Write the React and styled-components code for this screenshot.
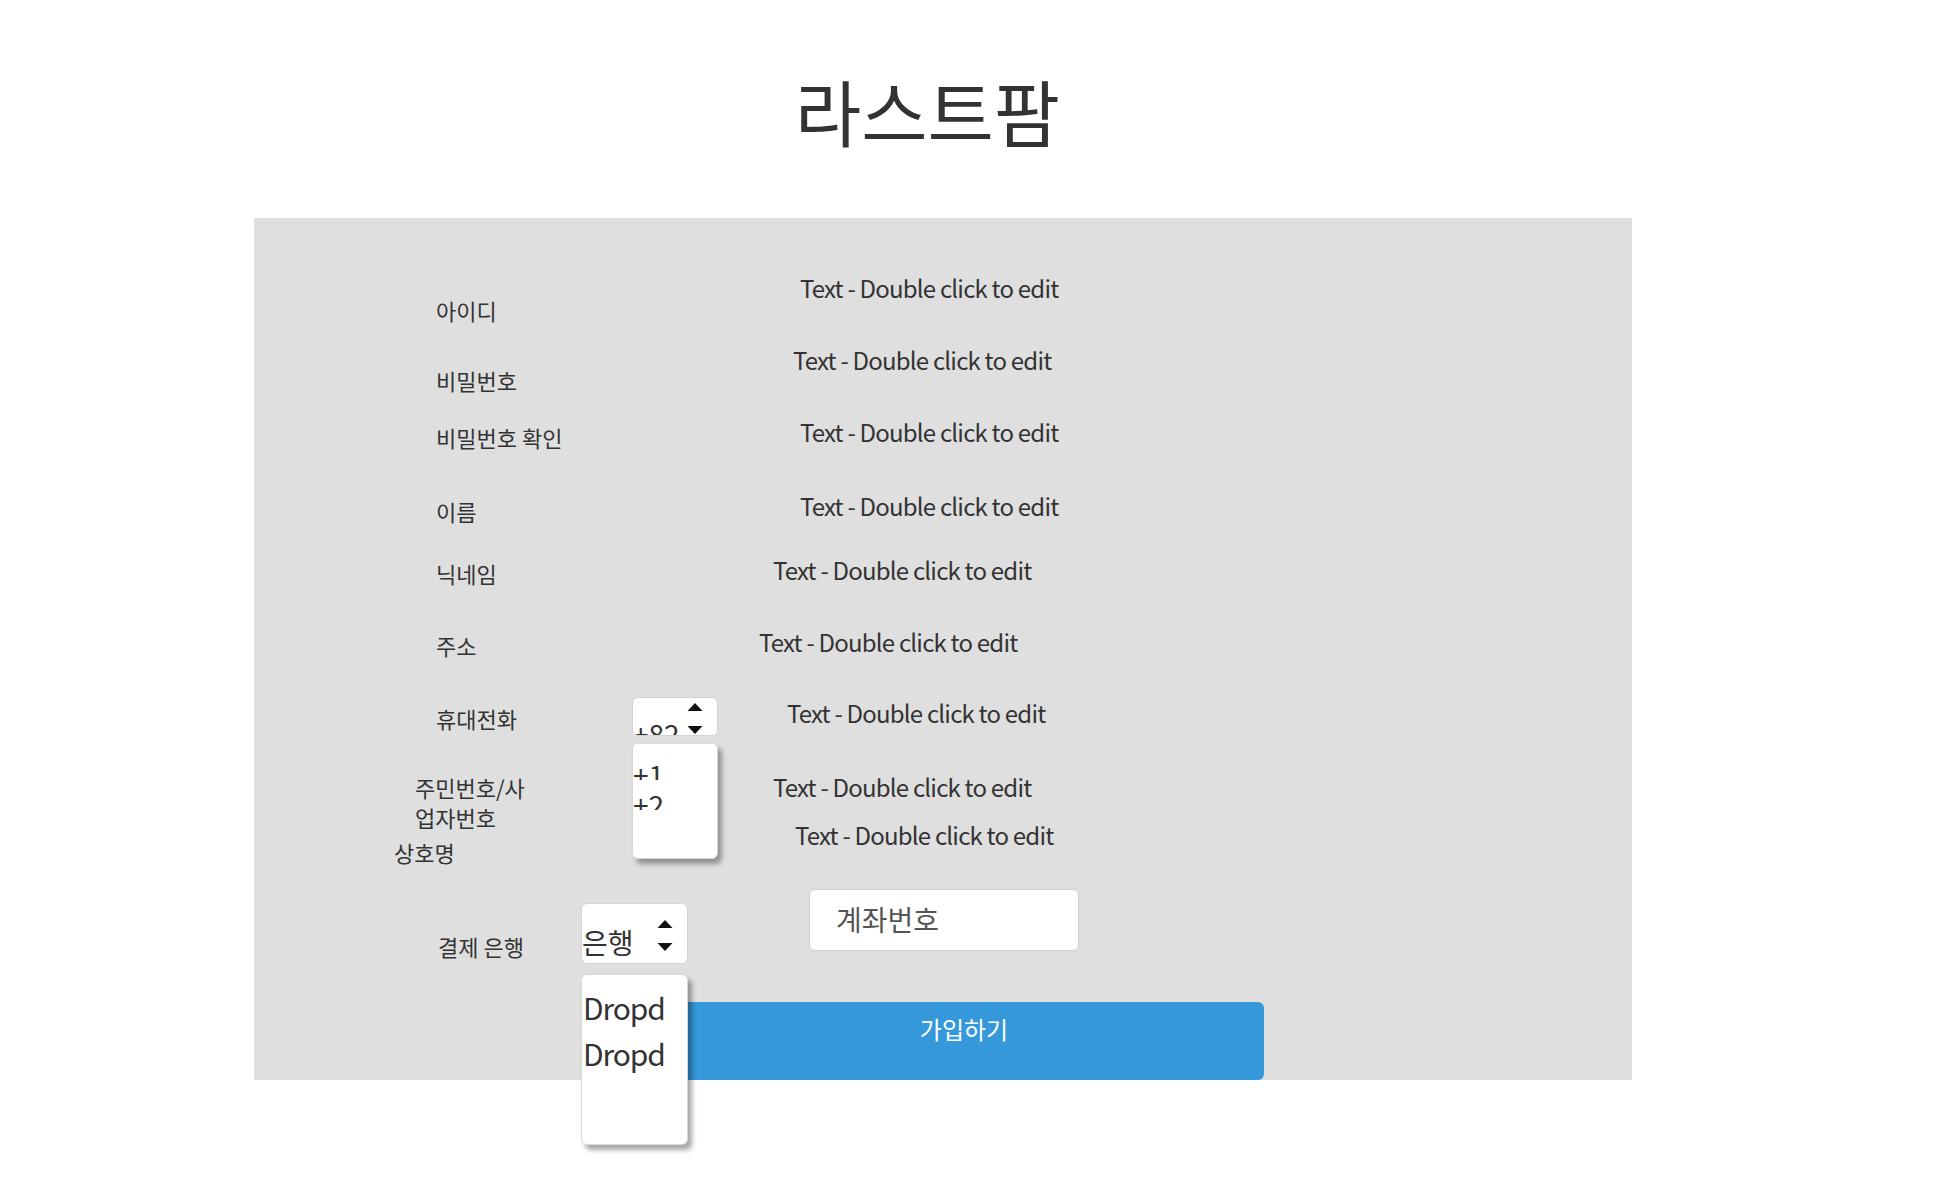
import styled, { createGlobalStyle } from "styled-components";

const GlobalStyle = createGlobalStyle`
  html, body {
    margin: 0;
    padding: 0;
    background: #ffffff;
  }
  body {
    font-family: "Noto Sans CJK KR", "Noto Sans", sans-serif;
    color: #333333;
  }
`;

const Page = styled.main`
  width: 1956px;
  min-height: 1200px;
`;

const Header = styled.header`
  height: 218px;
  box-sizing: border-box;
  padding: 74px 0 0 795px;
`;

const Title = styled.h1`
  margin: 0;
  font-size: 72px;
  font-weight: 400;
  line-height: 72px;
  color: #333333;
`;

const Panel = styled.section`
  margin-left: 254px;
  width: 1378px;
  height: 862px;
  background: #dfdfdf;
  display: flex;
  flex-direction: column;
`;

const Fields = styled.div`
  display: flex;
  height: 671px;
`;

const LabelColumn = styled.div`
  width: 378px;
  display: flex;
  flex-direction: column;
  align-items: flex-start;
`;

const Label = styled.div`
  margin: ${({ $top }) => $top}px 0 0 ${({ $left }) => $left}px;
  width: ${({ $width }) => ($width ? `${$width}px` : "auto")};
  flex-shrink: 0;
  font-size: 22px;
  line-height: 30px;
  white-space: nowrap;
`;

const ValueColumn = styled.div`
  flex: 1;
  display: flex;
  flex-direction: column;
  align-items: flex-start;
`;

const EditText = styled.div`
  margin: ${({ $top }) => $top}px 0 0 ${({ $left }) => $left}px;
  font-size: 24px;
  line-height: 30px;
  letter-spacing: -0.8px;
  white-space: nowrap;
  color: #333333;
`;

const PhoneRow = styled.div`
  display: flex;
  align-items: flex-start;
  margin-top: ${({ $top }) => $top}px;
`;

const SelectWrap = styled.div`
  position: relative;
  flex-shrink: 0;
  width: ${({ $w }) => $w}px;
  height: ${({ $h }) => $h}px;
  margin-top: ${({ $top }) => $top || 0}px;
`;

const SelectFace = styled.div`
  height: 100%;
  box-sizing: border-box;
  display: flex;
  justify-content: space-between;
  align-items: flex-start;
  overflow: hidden;
  background: #ffffff;
  border: 1px solid #d4d4d4;
  border-radius: 6px;
`;

const SelectValue = styled.div`
  padding-top: ${({ $pad }) => $pad}px;
  font-size: ${({ $size }) => $size}px;
  line-height: ${({ $lh }) => $lh}px;
  white-space: nowrap;
  color: #333333;
`;

const Arrows = styled.div`
  display: flex;
  flex-direction: column;
  gap: 15px;
  padding-top: ${({ $pad }) => $pad}px;
  margin-right: 14px;
  flex-shrink: 0;
`;

const Menu = styled.ul`
  position: absolute;
  left: 0;
  top: calc(100% + ${({ $gap }) => $gap}px);
  z-index: 2;
  width: 100%;
  height: ${({ $h }) => $h}px;
  box-sizing: border-box;
  margin: 0;
  padding: ${({ $pad }) => $pad}px 0 0;
  list-style: none;
  overflow: hidden;
  background: #ffffff;
  border: 1px solid #d8d8d8;
  border-radius: 6px;
  box-shadow: 4px 5px 5px rgba(0, 0, 0, 0.35);
`;

const MenuItem = styled.li`
  height: ${({ $h }) => $h}px;
  overflow: hidden;
  padding-left: ${({ $indent }) => $indent}px;
  font-size: ${({ $size }) => $size}px;
  line-height: ${({ $lh }) => $lh}px;
  letter-spacing: ${({ $ls }) => $ls || 0}px;
  white-space: nowrap;
  color: #333333;
`;

const MenuText = styled.span`
  display: block;
  padding-top: ${({ $pad }) => $pad}px;
`;

const BankRow = styled.div`
  display: flex;
  align-items: flex-start;
  height: 75px;
`;

const AccountInput = styled.input`
  margin-left: 121px;
  width: 270px;
  height: 62px;
  box-sizing: border-box;
  padding: 0 0 2px 26px;
  border: 1px solid #d0d0d0;
  border-radius: 6px;
  background: #ffffff;
  font-family: inherit;
  font-size: 28px;
  color: #333333;
  outline: none;

  &::placeholder {
    color: #555555;
  }
`;

const SubmitButton = styled.button`
  margin: 38px 0 0 410px;
  width: 600px;
  height: 78px;
  box-sizing: border-box;
  padding: 9px 0 33px;
  border: none;
  border-radius: 6px;
  background: #3498db;
  color: #ffffff;
  font-family: inherit;
  font-size: 24px;
  line-height: 36px;
  text-align: center;
  cursor: pointer;
`;

function Arrow({ down }) {
	return (
		<svg width="16" height="8" viewBox="0 0 16 8">
			<path d={down ? "M0.5 0h15L8 8z" : "M8 0l7.5 8H0.5z"} fill="#111111" />
		</svg>
	);
}

const labels = [
	{ text: "아이디", top: 77, left: 182 },
	{ text: "비밀번호", top: 40, left: 182 },
	{ text: "비밀번호 확인", top: 27, left: 182 },
	{ text: "이름", top: 44, left: 182 },
	{ text: "닉네임", top: 32, left: 182 },
	{ text: "주소", top: 42, left: 182 },
	{ text: "휴대전화", top: 43, left: 182 },
	{ text: ["주민번호/사", "업자번호"], top: 39, left: 161 },
	{ text: "상호명", top: 5, left: 140 },
];

const EDIT = "Text - Double click to edit";

const topTexts = [
	{ top: 55, left: 168 },
	{ top: 42, left: 161 },
	{ top: 42, left: 168 },
	{ top: 44, left: 168 },
	{ top: 34, left: 141 },
	{ top: 42, left: 127 },
];

const bottomTexts = [
	{ top: 36, left: 141 },
	{ top: 18, left: 163 },
];

export default function App() {
	return (
		<Page>
			<GlobalStyle />
			<Header>
				<Title>라스트팜</Title>
			</Header>
			<Panel>
				<Fields>
					<LabelColumn>
						{labels.map(({ text, top, left }) => (
							<Label key={String(text)} $top={top} $left={left}>
								{Array.isArray(text) ? (
									<>
										{text[0]}
										<br />
										{text[1]}
									</>
								) : (
									text
								)}
							</Label>
						))}
					</LabelColumn>
					<ValueColumn>
						{topTexts.map(({ top, left }, i) => (
							<EditText key={`t-${i}`} $top={top} $left={left}>
								{EDIT}
							</EditText>
						))}
						<PhoneRow $top={40}>
							<SelectWrap $w={86} $h={39}>
								<SelectFace>
									<SelectValue $pad={20} $size={28} $lh={30}>
										+82
									</SelectValue>
									<Arrows $pad={5}>
										<Arrow />
										<Arrow down />
									</Arrows>
								</SelectFace>
								<Menu $gap={7} $h={116} $pad={6}>
									{["+1", "+2"].map((code) => (
										<MenuItem key={code} $h={30} $indent={0} $size={28} $lh={30}>
											<MenuText $pad={9}>{code}</MenuText>
										</MenuItem>
									))}
								</Menu>
							</SelectWrap>
							<EditText $top={1} $left={69}>
								{EDIT}
							</EditText>
						</PhoneRow>
						{bottomTexts.map(({ top, left }, i) => (
							<EditText key={`b-${i}`} $top={top} $left={left}>
								{EDIT}
							</EditText>
						))}
					</ValueColumn>
				</Fields>
				<BankRow>
					<Label $top={42} $left={184} $width={143}>
						결제 은행
					</Label>
					<SelectWrap $w={107} $h={61} $top={14}>
						<SelectFace>
							<SelectValue $pad={18} $size={28} $lh={40}>
								은행
							</SelectValue>
							<Arrows $pad={16}>
								<Arrow />
								<Arrow down />
							</Arrows>
						</SelectFace>
						<Menu $gap={10} $h={171} $pad={9}>
							{["Dropd", "Dropd"].map((item, i) => (
								<MenuItem key={`d-${i}`} $h={46} $indent={1} $size={30} $lh={46} $ls={-1.1}>
									{item}
								</MenuItem>
							))}
						</Menu>
					</SelectWrap>
					<AccountInput placeholder="계좌번호" />
				</BankRow>
				<SubmitButton type="button">가입하기</SubmitButton>
			</Panel>
		</Page>
	);
}
